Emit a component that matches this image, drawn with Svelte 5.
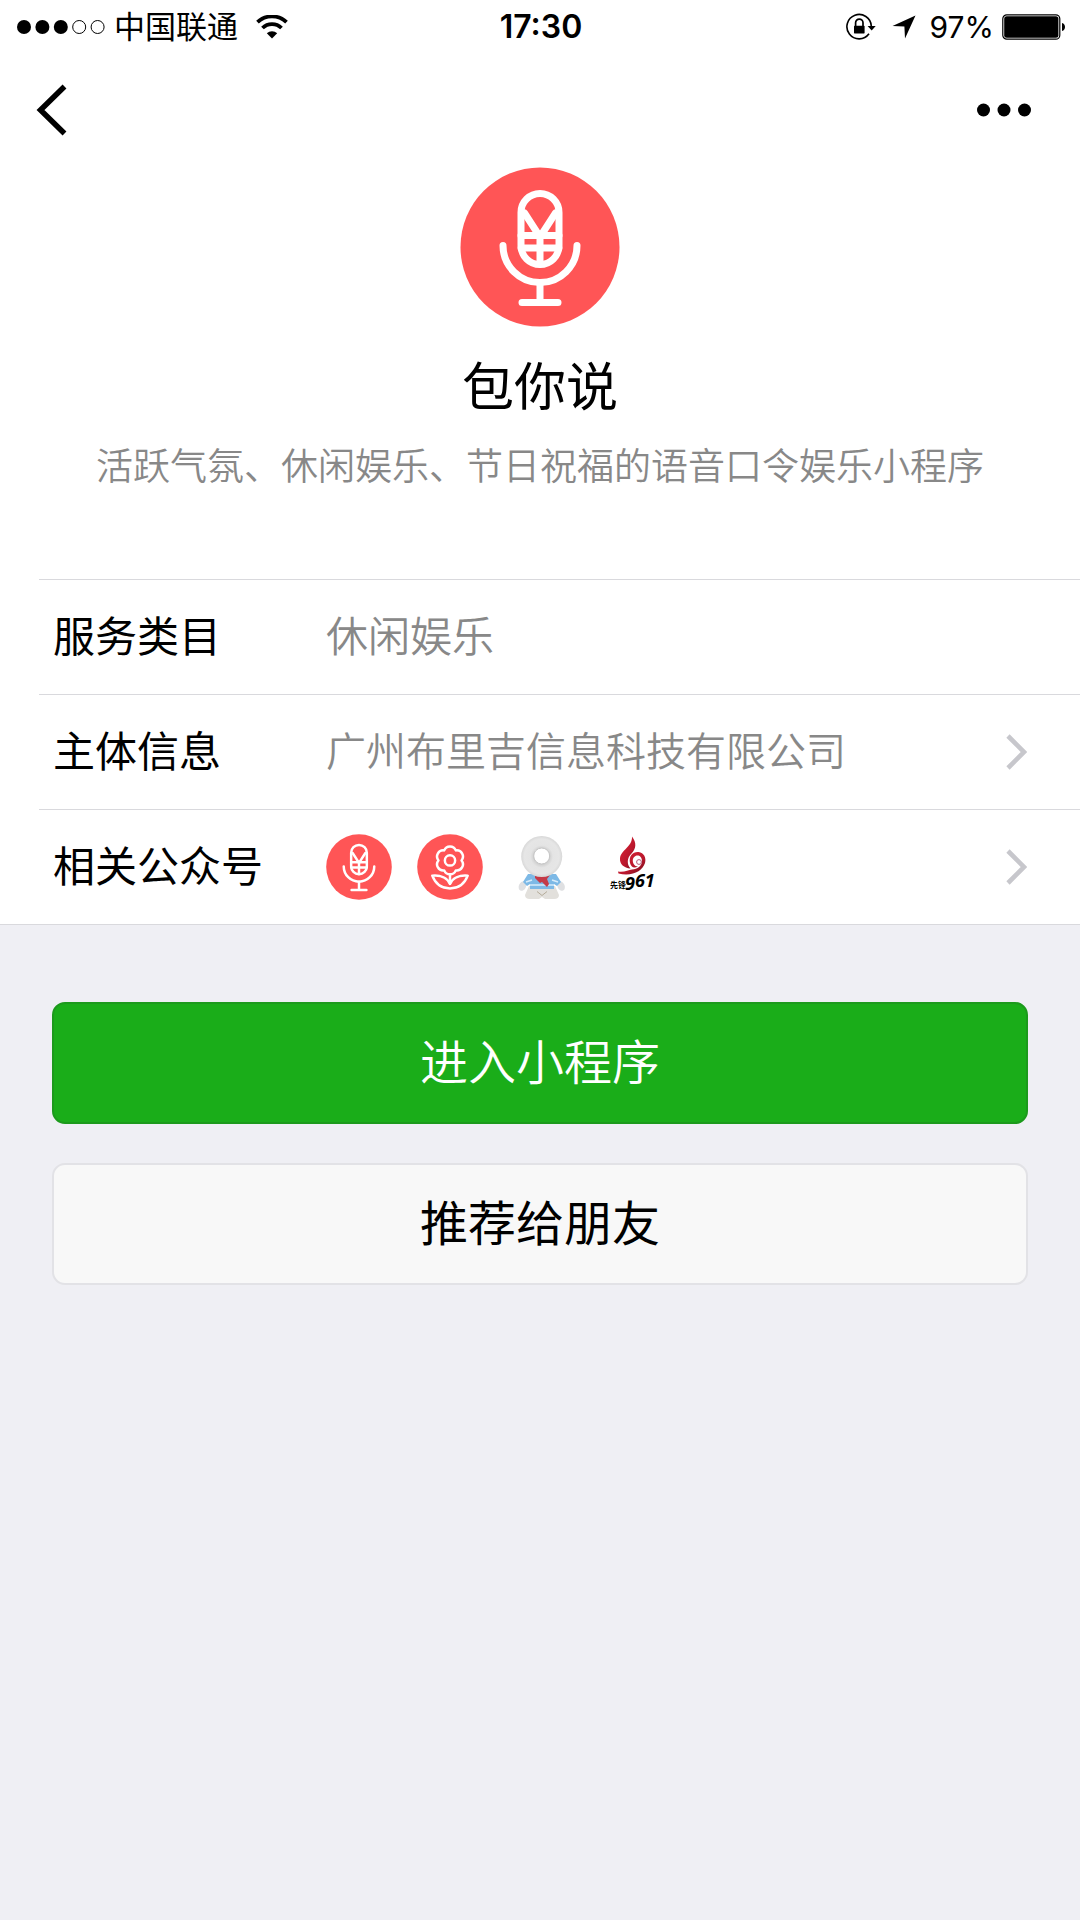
<script lang="ts">
  const app = {
    name: "包你说",
    description: "活跃气氛、休闲娱乐、节日祝福的语音口令娱乐小程序",
    category: "休闲娱乐",
    company: "广州布里吉信息科技有限公司",
  };

  const signal = [true, true, true, false, false];
</script>

{#snippet mic(stroke: number)}
  <svg viewBox="0 0 160 160" aria-hidden="true">
    <circle cx="80" cy="80" r="79.500" fill="#ff5556" />
    <g
      fill="none"
      stroke="#fff"
      stroke-width={stroke}
      stroke-linecap="round"
      stroke-linejoin="round"
    >
      <rect x="61" y="26.500" width="38" height="71" rx="19" />
      <path d="M64.500 46 80 70 95.500 46" />
      <path d="M61 68.500h38M61 81h38M80 67v30" />
      <path d="M43 78.500a37 37 0 0 0 74 0" />
      <path d="M80 116v19M62 135.500h36" />
    </g>
  </svg>
{/snippet}

{#snippet chevron()}
  <svg class="chevron" viewBox="0 0 21 36" aria-hidden="true">
    <path d="M2 2 18 18 2 34" fill="none" stroke="#c7c7cc" stroke-width="4.600" />
  </svg>
{/snippet}

<div class="page">
  <div class="status">
    <div class="carrier">
      <svg class="signal" viewBox="0 0 90 16" aria-hidden="true">
        {#each signal as on, i}
          <circle
            cx={8 + i * 18.4}
            cy="8"
            r={on ? 7 : 6.5}
            fill={on ? "#000" : "none"}
            stroke={on ? "none" : "#000"}
          />
        {/each}
      </svg>
      <span>中国联通</span>
      <svg class="wifi" viewBox="0 0 32 24" aria-hidden="true">
        <g fill="none" stroke="#000" stroke-width="3.800">
          <path d="M1.500 7.200a21 21 0 0 1 29 0" />
          <path d="M6.500 13a13.500 13.500 0 0 1 19 0" />
        </g>
        <path d="M16 23.500 10.800 18.300a7.500 7.500 0 0 1 10.400 0z" />
      </svg>
    </div>
    <time>17:30</time>
    <div class="power">
      <svg class="lock" viewBox="0 0 30 28" aria-hidden="true">
        <g fill="none" stroke="#000" stroke-width="1.600">
          <path d="M23 20.800A12.200 12.200 0 1 1 25.300 13" />
          <path d="M9.600 13.500v-3.700a3.700 3.700 0 0 1 7.400 0v3.700" stroke-width="1.700" />
        </g>
        <rect x="8" y="12.800" width="10.600" height="7.600" rx="0.600" />
        <path d="M21.600 13h8.100l-4 4.400z" />
      </svg>
      <svg class="arrow" viewBox="0 0 24 24" aria-hidden="true">
        <path d="M23.500.5 13 23.500 12.400 11.600.5 11z" />
      </svg>
      <span class="percent">97%</span>
      <svg class="battery" viewBox="0 0 64 26" aria-hidden="true">
        <rect x="0.800" y="0.800" width="57" height="24.400" rx="4" fill="none" stroke="#000" stroke-width="1.200" />
        <rect x="2.200" y="2.200" width="54.200" height="21.600" rx="2.500" />
        <path d="M60 9c4 1 4 7 0 8z" />
      </svg>
    </div>
  </div>

  <nav>
    <button class="icon" aria-label="返回">
      <svg class="back" viewBox="0 0 31 52" aria-hidden="true">
        <path d="M28.500 2.500 4.500 26 28.500 49.500" fill="none" stroke="#000" stroke-width="5.500" />
      </svg>
    </button>
    <button class="icon" aria-label="更多">
      <svg class="more" viewBox="0 0 56 14" aria-hidden="true">
        <circle cx="7.500" cy="7" r="6.500" />
        <circle cx="28" cy="7" r="6.500" />
        <circle cx="48.500" cy="7" r="6.500" />
      </svg>
    </button>
  </nav>

  <header>
    <div class="logo">{@render mic(7)}</div>
    <h1>{app.name}</h1>
    <p>{app.description}</p>
  </header>

  <ul>
    <li>
      <div class="row">
        <span class="label">服务类目</span>
        <span class="value">{app.category}</span>
      </div>
    </li>
    <li>
      <button class="row">
        <span class="label">主体信息</span>
        <span class="value company">{app.company}</span>
        {@render chevron()}
      </button>
    </li>
    <li>
      <button class="row">
        <span class="label">相关公众号</span>
        <span class="value accounts">
          {@render mic(6)}

          <!-- flower -->
          <svg viewBox="0 0 160 160" aria-hidden="true">
            <circle cx="80" cy="80" r="79.500" fill="#ff5556" />
            <g fill="none" stroke="#fff" stroke-width="6" stroke-linejoin="round" stroke-linecap="round">
              <circle cx="80" cy="64" r="12.500" />
              <path
                d="M66 39.800A15 15 0 0 1 94 39.800A15 15 0 0 1 108 64A15 15 0 0 1 94 88.200A15 15 0 0 1 66 88.200A15 15 0 0 1 52 64A15 15 0 0 1 66 39.800z"
              />
              <path d="M80 98v22" />
              <path d="M37 101C58 99 74 107 80 121C86 107 102 99 123 101C115 122 100 132 80 132C60 132 45 122 37 101z" />
            </g>
          </svg>

          <!-- vinyl toy -->
          <svg viewBox="0 0 66 66" aria-hidden="true">
            <defs>
              <radialGradient id="head">
                <stop offset="0.4" stop-color="#d2d2d2" />
                <stop offset="0.55" stop-color="#e4e4e4" />
                <stop offset="0.85" stop-color="#e6e6e6" />
                <stop offset="1" stop-color="#d8d8d8" />
              </radialGradient>
            </defs>
            <ellipse cx="14.500" cy="52" rx="3.600" ry="5" fill="#dfe0e2" transform="rotate(25 14.500 52)" />
            <ellipse cx="53" cy="52" rx="3.600" ry="5" fill="#dfe0e2" transform="rotate(-25 53 52)" />
            <path d="M21 52h26l4 9q0 4-5 4h-9l-3-2-3 2h-9q-5 0-5-4z" fill="#e2e0dc" />
            <path d="M29 57.500l5 4 5-4" fill="none" stroke="#b5ac9a" />
            <path d="M20 40h28l5 8-4 4-3-2v5H22v-5l-3 2-4-4z" fill="#7db9e6" />
            <path d="M18 48l6-2M22 51h24M44 46l6 2" stroke="#d8ecfa" stroke-width="1.500" />
            <path d="M27 41h15l-3 4 2 5-2 3-5-5-2 1-5-5z" fill="#c43a48" />
            <circle cx="33.700" cy="22.500" r="20.500" fill="url(#head)" />
            <circle cx="33.700" cy="22" r="8" fill="#fff" stroke="#c4c4c4" />
          </svg>

          <!-- radio station -->
          <svg viewBox="0 0 66 66" role="img" aria-label="先锋961">
            <defs>
              <linearGradient id="flame" x1="0" y1="0" x2="1" y2="1">
                <stop offset="0" stop-color="#e02436" />
                <stop offset="0.6" stop-color="#b9172c" />
                <stop offset="1" stop-color="#6d0d1c" />
              </linearGradient>
            </defs>
            <g fill="url(#flame)">
              <path d="M33 2.500C38 9 37 15 32.500 19.500C28 24 27.500 30 31.500 34.500C25 34 20.500 30 21 24.500C21.500 16 33.500 13 33 2.500z" />
              <path
                d="M31 29C29.500 22 34 17.500 39.500 18C45 18.500 47.500 24 46 29C43.500 37 33 43 19.500 39.500L19 37.500C25 38.500 29.500 36 33 35.500C38.500 35 43 32 43 27C43 22.500 39.500 20.500 36.500 22C33.500 23.500 33 27 35 30.500C36 32 37.500 32.500 39 32.300C35 35 32 33 31 29z"
              />
            </g>
            <circle cx="40" cy="28" r="2.400" fill="none" stroke="#b75a7c" stroke-width="1" />
            <text class="station" x="11" y="53.500" font-size="8">先锋</text>
            <text class="digits" x="26" y="56" font-size="18">9<tspan dy="-3">61</tspan></text>
          </svg>
        </span>
        {@render chevron()}
      </button>
    </li>
  </ul>

  <div class="actions">
    <button class="primary">进入小程序</button>
    <button>推荐给朋友</button>
  </div>
</div>

<style>
  :global(body) {
    background: #efeff4;
  }

  .page {
    color: #000;
    font-family: Inter, "Noto Sans CJK SC", sans-serif;
  }

  .status,
  nav,
  header,
  ul {
    background: #fff;
  }

  svg {
    display: block;
    flex: none;
  }

  button {
    border: 0;
    color: inherit;
    background: none;
    font: inherit;
    cursor: pointer;
  }

  .status {
    display: grid;
    grid-template-columns: 1fr auto 1fr;
    align-items: center;
    height: 54px;
    padding: 0 14px 0 16px;
    font-size: 31px;
    line-height: 54px;
  }

  .carrier,
  .power {
    display: flex;
    align-items: center;
  }

  .signal {
    width: 90px;
    margin-right: 8px;
  }

  .wifi {
    width: 32px;
    margin-left: 18px;
  }

  time {
    font-size: 32px;
    font-weight: 600;
  }

  .power {
    justify-content: flex-end;
  }

  .lock {
    width: 30px;
    margin-right: 16px;
  }

  .arrow {
    width: 24px;
    margin-right: 14px;
  }

  .percent {
    font-size: 30px;
  }

  .battery {
    width: 64px;
    margin-left: 8px;
  }

  nav {
    display: flex;
    align-items: center;
    justify-content: space-between;
    height: 112px;
    padding: 0 32px 0 20px;
  }

  .icon {
    padding: 16px;
  }

  .back {
    width: 31px;
  }

  .more {
    width: 56px;
  }

  header {
    padding: 1px 40px 92px;
    text-align: center;
  }

  .logo {
    width: 160px;
    margin: 0 auto 27px;
  }

  h1 {
    margin: 0 0 19px;
    font-size: 52px;
    font-weight: 400;
    line-height: 68px;
  }

  p {
    margin: 0;
    color: #888;
    font-family: "Noto Sans CJK SC", sans-serif;
    font-size: 37px;
    font-weight: 350;
    line-height: 46px;
  }

  ul {
    margin: 0;
    padding: 0 0 0 39px;
    border-bottom: 1px solid #d9d9dd;
    list-style: none;
  }

  li {
    border-top: 1px solid #d9d9dd;
  }

  .row {
    display: flex;
    align-items: center;
    box-sizing: border-box;
    width: 100%;
    min-height: 114px;
    padding: 0 53px 0 14px;
    font-size: 42px;
    line-height: 56px;
    text-align: left;
  }

  .label {
    flex: none;
    width: 273px;
  }

  .value {
    flex: 1;
    color: #888;
    font-weight: 350;
  }

  .company {
    font-size: 40px;
  }

  .accounts {
    display: flex;
    gap: 25px;
  }

  .accounts svg {
    width: 66px;
  }

  .station {
    font-family: "Noto Sans CJK SC", sans-serif;
    font-weight: 700;
  }

  .digits {
    font-family: "Noto Sans", sans-serif;
    font-style: italic;
    font-weight: 700;
  }

  .chevron {
    width: 21px;
  }

  .actions {
    display: grid;
    gap: 39px;
    padding: 77px 52px;
  }

  .actions button {
    padding: 25px;
    border: 2px solid #e2e2e6;
    border-radius: 13px;
    background: #f8f8f8;
    font-size: 48px;
    line-height: 68px;
  }

  .actions .primary {
    border-color: #1c9a1c;
    color: #fff;
    background: #1aad19;
    font-weight: 350;
  }
</style>
